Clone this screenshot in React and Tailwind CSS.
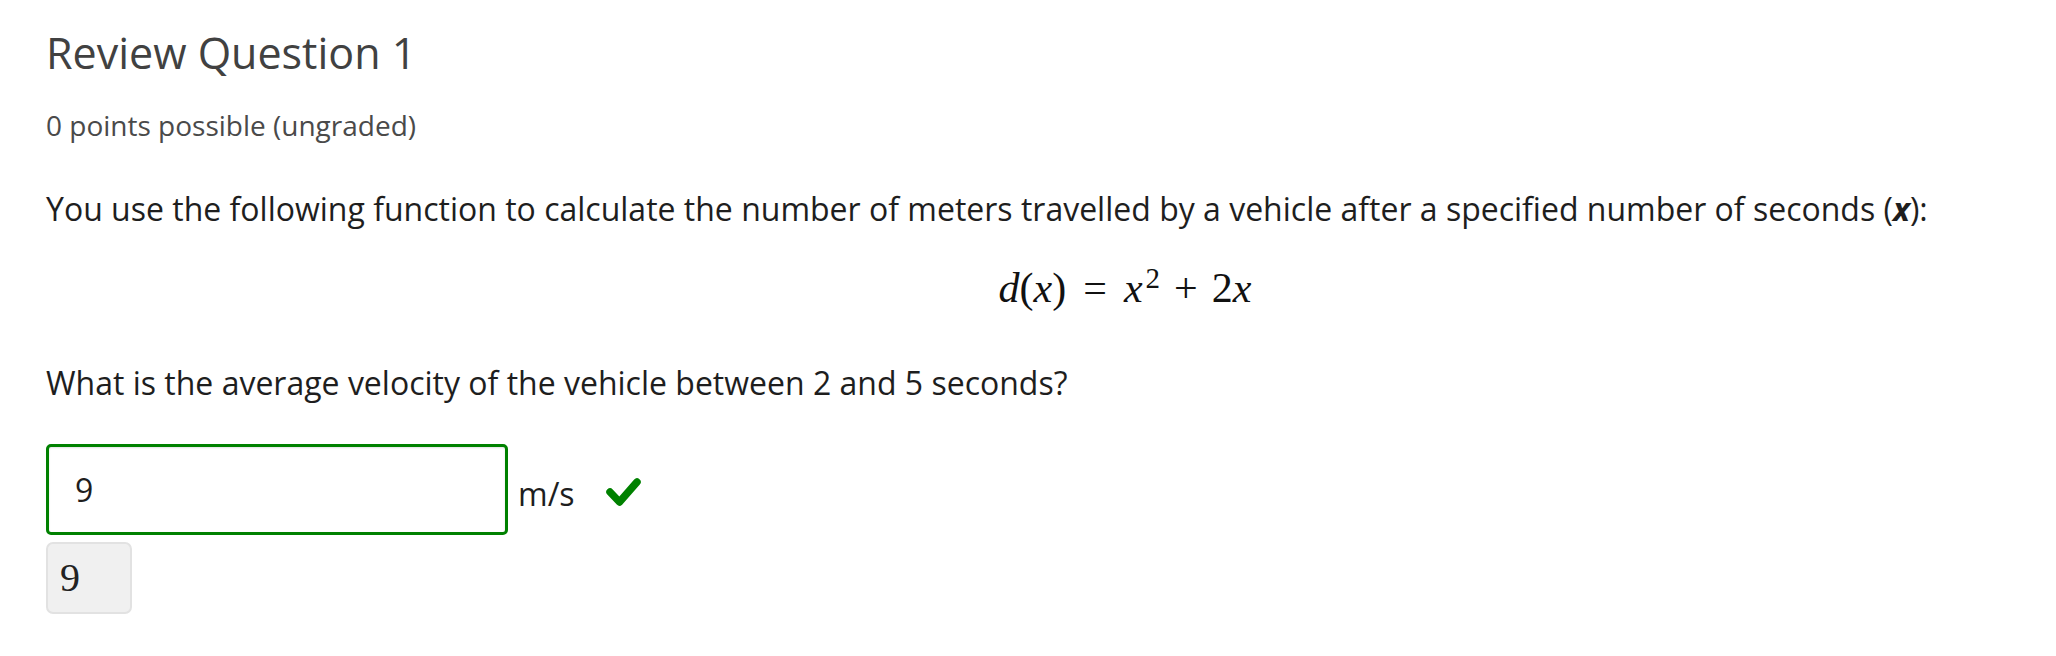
import React from 'react';

// Zielbild: edX-Aufgabe mit Formel, Antwortfeld und Vorschau
const tex = "font-['Liberation_Serif','DejaVu_Serif',serif]";

function CheckIcon() {
  return (
    <svg width="37" height="30" viewBox="0 0 37 30" aria-hidden="true">
      <polyline points="5,15 14.5,25 32,5" fill="none" stroke="#008100"
        strokeWidth="7.5" strokeLinecap="round" strokeLinejoin="round" />
    </svg>
  );
}

function Formel() {
  return (
    <div className={`${tex} text-[42px] leading-[50px] text-[#111] whitespace-nowrap`}>
      <span className="italic">d</span>
      <span>(</span>
      <span className="italic">x</span>
      <span>)</span>
      <span className="mx-[17px]">=</span>
      <span className="italic">x</span>
      <sup className="text-[29px] ml-[3px]">2</sup>
      <span className="mx-[14px]">+</span>
      <span>2</span>
      <span className="italic">x</span>
    </div>
  );
}

export default function App() {
  return (
    <div className="min-h-screen bg-white px-[46px] font-['Open_Sans','Liberation_Sans',sans-serif]">
      <h2 className="pt-[25px] text-[43px] leading-[56px] font-normal text-[#414141]">
        Review Question 1
      </h2>

      <div className="mt-[24px] text-[28px] leading-[40px] text-[#4a4a4a]">
        0 points possible (ungraded)
      </div>

      <p className="mt-[42px] text-[32px] leading-[44px] text-[#1e1e1e]">
        You use the following function to calculate the number of meters travelled by a vehicle after a specified number of seconds (<b className="italic font-bold">x</b>):
      </p>

      <div className="mt-[32px] flex justify-center pl-[194px]">
        <Formel />
      </div>

      <p className="mt-[48px] text-[32px] leading-[44px] text-[#1e1e1e]">
        What is the average velocity of the vehicle between 2 and 5 seconds?
      </p>

      <div className="mt-[39px] flex items-start">
        <input
          readOnly
          value="9"
          className="w-[462px] h-[91px] border-[3px] border-[#008100] rounded-[5px] pl-[26px] text-[32px] text-[#1e1e1e] bg-white shadow-[inset_0_1px_2px_rgba(0,0,0,0.12)] outline-none font-['Open_Sans',sans-serif]"
        />
        <span className="ml-[10px] mt-[28px] text-[32px] leading-[44px] text-[#1e1e1e]">m/s</span>
        <span className="ml-[30px] mt-[33px]"><CheckIcon /></span>
      </div>

      <div className={`mt-[7px] w-[86px] h-[72px] flex items-center pl-[12px] bg-[#f0f0f0] border-2 border-[#e2e2e2] rounded-[7px] ${tex} text-[40px] leading-[48px] text-[#222]`}>
        9
      </div>
    </div>
  );
}
